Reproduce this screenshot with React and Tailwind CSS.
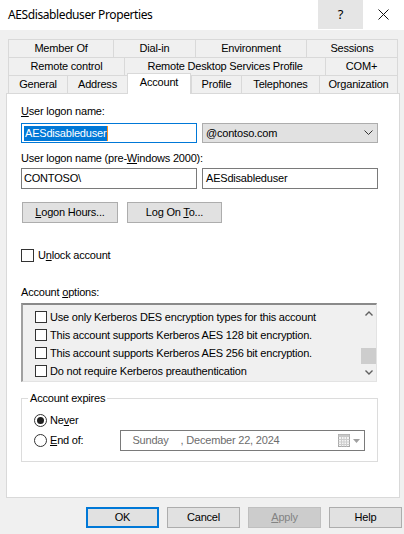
import React from "react";

const F = { fontFamily: '"Liberation Sans", Arial, sans-serif' };

function Tab({ w, children, last, selected }) {
  if (selected) {
    return (
      <div
        className={`relative z-10 mb-[-1px] flex h-[21px] items-start justify-center border-x border-t border-[#d9d9d9] bg-white pt-[2px] shrink-0`}
        style={{ width: w }}
      >
        {children}
      </div>
    );
  }
  return (
    <div
      className={`flex h-[18px] items-center justify-center border-l border-t border-[#d9d9d9] bg-[#f0f0f0] shrink-0 ${last ? "border-r" : ""}`}
      style={{ width: w }}
    >
      {children}
    </div>
  );
}

function Check({ size = 13 }) {
  return (
    <div
      className="shrink-0 border border-[#333333] bg-white"
      style={{ width: size, height: size }}
    />
  );
}

function Radio({ checked }) {
  return (
    <div className="flex h-[13px] w-[13px] shrink-0 items-center justify-center rounded-full border border-[#333333] bg-white">
      {checked && <div className="h-[7px] w-[7px] rounded-full bg-[#202020]" />}
    </div>
  );
}

function Btn({ w, children, def, disabled }) {
  return (
    <div
      className={`flex h-[21px] shrink-0 items-center justify-center ${
        def
          ? "border-2 border-[#0078d7] bg-[#e1e1e1]"
          : disabled
          ? "border border-[#bfbfbf] bg-[#cccccc] text-[#838383]"
          : "border border-[#adadad] bg-[#e1e1e1]"
      }`}
      style={{ width: w }}
    >
      {children}
    </div>
  );
}

const U = ({ children }) => <span className="underline underline-offset-[1px]">{children}</span>;

export default function App() {
  return (
    <div
      className="h-[534px] w-[404px] overflow-hidden bg-[#f0f0f0] text-[11px] leading-[13px] tracking-[-0.2px] text-black"
      style={F}
    >
      {/* Title bar */}
      <div className="flex h-[30px] items-start bg-white">
        <div
          className="flex h-[29px] flex-1 items-center pl-[8px] text-[12px] tracking-[-0.4px]"
          style={{ fontFamily: '"Noto Sans", "Open Sans", sans-serif' }}
        >
          AESdisableduser Properties
        </div>
        <div
          className="flex h-[29px] w-[45px] items-center justify-center bg-[#e5e5e5] text-[13px]"
          style={{ fontFamily: '"Noto Sans", sans-serif' }}
        >
          ?
        </div>
        <div className="flex h-[29px] w-[41px] items-center justify-center">
          <svg width="11" height="11" viewBox="0 0 11 11">
            <path d="M0.5 0.5 L10.5 10.5 M10.5 0.5 L0.5 10.5" stroke="#111" strokeWidth="1" />
          </svg>
        </div>
      </div>

      {/* Tabs */}
      <div className="ml-[8px] mt-[9px] flex w-[390px] flex-col">
        <div className="flex h-[18px]">
          <Tab w={105}>Member Of</Tab>
          <Tab w={82}>Dial-in</Tab>
          <Tab w={111}>Environment</Tab>
          <Tab w={92} last>Sessions</Tab>
        </div>
        <div className="flex h-[18px]">
          <Tab w={116}>Remote control</Tab>
          <Tab w={201}>Remote Desktop Services Profile</Tab>
          <Tab w={73} last>COM+</Tab>
        </div>
        <div className="flex h-[18px] items-end">
          <Tab w={59}>General</Tab>
          <Tab w={60}>Address</Tab>
          <Tab w={64} selected>Account</Tab>
          <Tab w={50}>Profile</Tab>
          <Tab w={78}>Telephones</Tab>
          <Tab w={79} last>Organization</Tab>
        </div>
      </div>

      {/* Panel */}
      <div className="ml-[6px] flex h-[405px] w-[394px] flex-col border border-[#d9d9d9] bg-white pl-[14px]">
        <div className="mt-[11px]">
          <U>U</U>ser logon name:
        </div>
        <div className="mt-[5px] flex">
          <div className="flex h-[20px] w-[176px] items-center border border-[#0078d7] bg-white pl-[2px]">
            <span className="flex h-[15px] items-center bg-[#0078d7] pl-[1px] pr-[1px] text-white">
              AESdisableduser
            </span>
            <span className="h-[15px] w-[1px] bg-[#ff8c1a]" />
          </div>
          <div className="ml-[5px] flex h-[20px] w-[176px] items-center justify-between border border-[#adadad] bg-[#e1e1e1] pl-[3px] pr-[4px]">
            <span>@contoso.com</span>
            <svg width="9" height="6" viewBox="0 0 9 6">
              <path d="M0.5 0.5 L4.5 4.5 L8.5 0.5" stroke="#333" strokeWidth="1" fill="none" />
            </svg>
          </div>
        </div>
        <div className="mt-[9px]">
          User logon name (pre-<U>W</U>indows 2000):
        </div>
        <div className="mt-[3px] flex">
          <div className="flex h-[21px] w-[176px] items-center border border-[#7a7a7a] bg-white pl-[2px]">
            CONTOSO\
          </div>
          <div className="ml-[5px] flex h-[21px] w-[176px] items-center border border-[#7a7a7a] bg-white pl-[3px]">
            AESdisableduser
          </div>
        </div>
        <div className="mt-[13px] flex pl-[1px]">
          <Btn w={96}>
            <span>
              <U>L</U>ogon Hours...
            </span>
          </Btn>
          <div className="ml-[9px]">
            <Btn w={95}>
              <span>
                Log On <U>T</U>o...
              </span>
            </Btn>
          </div>
        </div>
        <div className="mt-[26px] flex h-[13px] items-center gap-[4px]">
          <Check />
          <span>
            U<U>n</U>lock account
          </span>
        </div>
        <div className="mt-[24px]">
          Account <U>o</U>ptions:
        </div>
        <div className="mt-[4px] flex h-[79px] w-[356px] border-b border-l-2 border-r border-t-2 border-b-[#e3e3e3] border-l-[#a0a0a0] border-r-[#e3e3e3] border-t-[#8a8a8a] bg-[#f0f0f0]">
          <div className="flex flex-1 flex-col pl-[12px] pt-[3px]">
            {[
              "Use only Kerberos DES encryption types for this account",
              "This account supports Kerberos AES 128 bit encryption.",
              "This account supports Kerberos AES 256 bit encryption.",
              "Do not require Kerberos preauthentication",
            ].map((t) => (
              <div key={t} className="flex h-[18px] items-center gap-[3px]">
                <Check size={12} />
                <span>{t}</span>
              </div>
            ))}
          </div>
          <div className="flex w-[15px] flex-col items-center">
            <div className="flex h-[17px] w-full items-center justify-center">
              <svg width="8" height="5" viewBox="0 0 8 5">
                <path d="M0.5 4.5 L4 1 L7.5 4.5" stroke="#606060" strokeWidth="1.4" fill="none" />
              </svg>
            </div>
            <div className="mt-[26px] h-[17px] w-full bg-[#cdcdcd]" />
            <div className="mt-auto flex h-[17px] w-full items-center justify-center">
              <svg width="8" height="5" viewBox="0 0 8 5">
                <path d="M0.5 0.5 L4 4 L7.5 0.5" stroke="#606060" strokeWidth="1.4" fill="none" />
              </svg>
            </div>
          </div>
        </div>
        <fieldset className="mt-[10px] w-[357px] border border-[#dcdcdc] pb-[10px] pl-[12px]">
          <legend className="ml-[-6px] px-[2px]">Account expires</legend>
          <div className="mt-[9px] flex h-[13px] items-center gap-[3px]">
            <Radio checked />
            <span>
              Ne<U>v</U>er
            </span>
          </div>
          <div className="mt-[3px] flex h-[21px] items-center">
            <Radio />
            <span className="ml-[3px]">
              <U>E</U>nd of:
            </span>
            <div className="ml-[37px] flex h-[21px] w-[245px] items-center border border-[#7a7a7a] bg-white pl-[11px] pr-[4px] text-[#6d6d6d]">
              <span>Sunday</span>
              <span className="ml-[12px]">, December 22, 2024</span>
              <div className="ml-auto flex items-center gap-[3px]">
                <svg width="12" height="13" viewBox="0 0 12 13">
                  <rect x="0.5" y="0.5" width="11" height="12" fill="#f4f4f4" stroke="#a8a8a8" />
                  <rect x="0.5" y="0.5" width="11" height="2.5" fill="#c8c8c8" />
                  <path d="M3.5 3 V12.5 M6 3 V12.5 M8.5 3 V12.5 M0.5 5.5 H11.5 M0.5 8 H11.5 M0.5 10.5 H11.5" stroke="#cdcdcd" strokeWidth="1" />
                </svg>
                <svg width="7" height="4" viewBox="0 0 7 4">
                  <path d="M0 0 H7 L3.5 4 Z" fill="#a0a0a0" />
                </svg>
              </div>
            </div>
          </div>
        </fieldset>
      </div>

      {/* Bottom buttons */}
      <div className="ml-[86px] mt-[9px] flex gap-[8px]">
        <Btn w={73} def>OK</Btn>
        <Btn w={73}>Cancel</Btn>
        <Btn w={73} disabled>
          <span>
            <U>A</U>pply
          </span>
        </Btn>
        <Btn w={73}>Help</Btn>
      </div>
    </div>
  );
}
